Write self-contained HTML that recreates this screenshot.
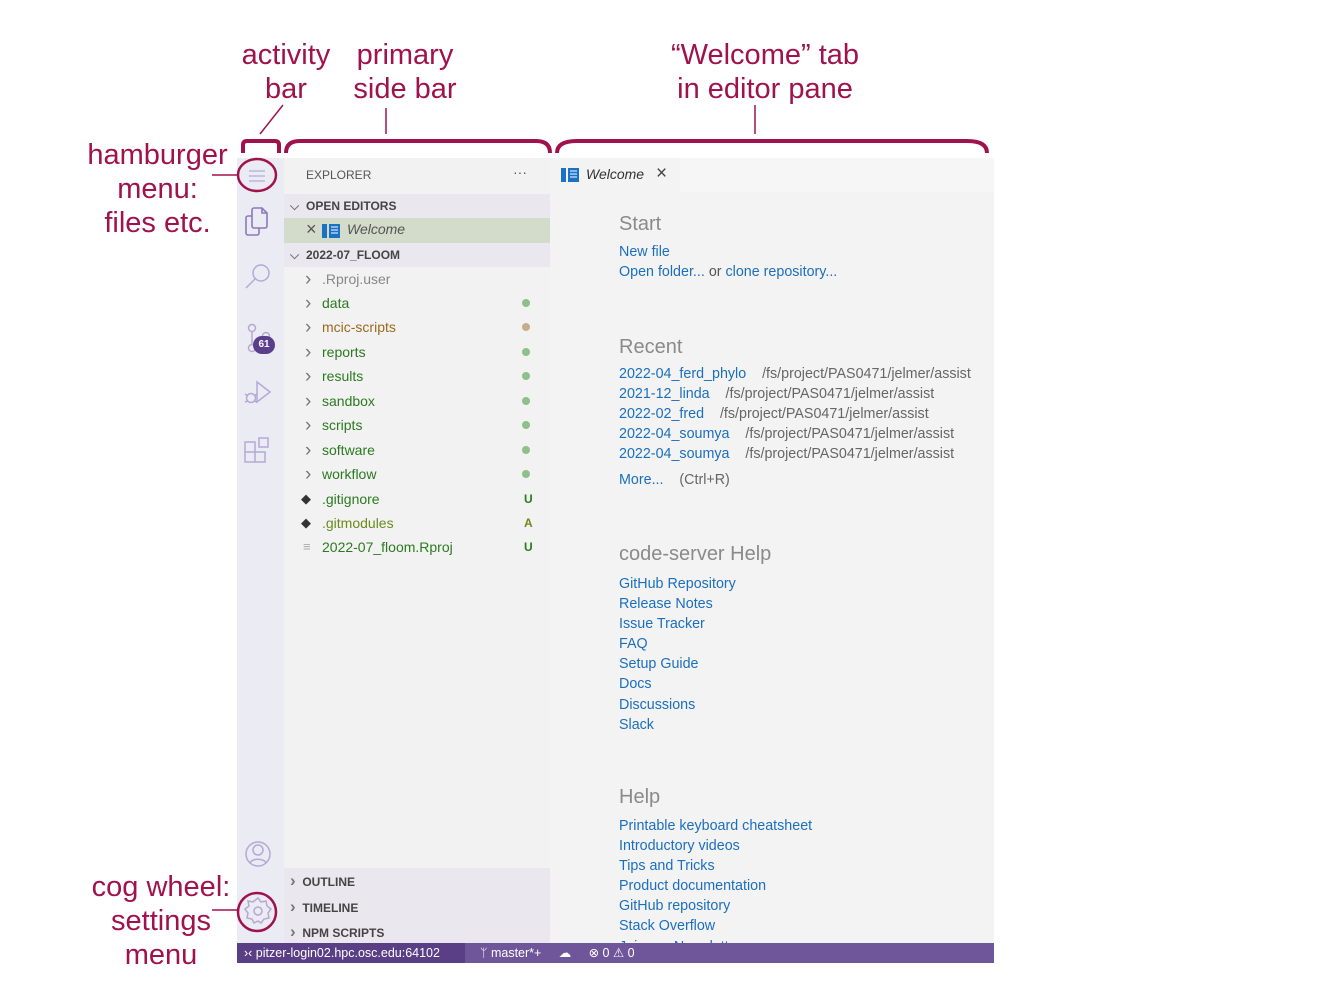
<!DOCTYPE html><html><head><meta charset="utf-8"><style>
*{margin:0;padding:0;box-sizing:border-box}
body{width:1323px;height:992px;background:#fff;position:relative;overflow:hidden;font-family:"Liberation Sans",sans-serif}
.a{position:absolute}
.ann{position:absolute;color:#a0124d;font-size:29px;text-align:center;line-height:34px}
.row{position:absolute;left:284px;width:266px;height:24px;font-size:14px;line-height:24px}
.row .n{position:absolute;left:38px}
.row .c{position:absolute;left:21px;top:2px;color:#777;font-size:19px;line-height:22px}
.dot{position:absolute;left:238px;top:8px;width:8px;height:8px;border-radius:50%;background:#8fbf8a}
.g{color:#2b7a1f}
.st{position:absolute;left:240px;font-size:12px;font-weight:bold;color:#2b7a1f}
.lnk{position:absolute;left:619px;color:#1b6fbf;font-size:14.3px;white-space:nowrap}
.path{color:#666;}
.h{position:absolute;left:619px;color:#8a8a8a;font-size:20px}
.sec{position:absolute;left:284px;width:266px;height:24px;background:#ebe7ef;font-size:12px;font-weight:bold;color:#444;line-height:24px}
</style></head><body>
<div class="ann" style="left:236px;top:38px;width:100px">activity<br>bar</div>
<div class="ann" style="left:340px;top:38px;width:130px">primary<br>side bar</div>
<div class="ann" style="left:640px;top:38px;width:250px">“Welcome” tab<br>in editor pane</div>
<div class="ann" style="left:80px;top:138px;width:155px;line-height:34px">hamburger<br>menu:<br>files etc.</div>
<div class="ann" style="left:86px;top:870px;width:150px;line-height:34px">cog wheel:<br>settings<br>menu</div>

<div class="a" style="left:237px;top:158px;width:47px;height:785px;background:#ebebf3"></div>
<div class="a" style="left:284px;top:158px;width:266px;height:785px;background:#f2f2f2"></div>
<div class="a" style="left:550px;top:158px;width:444px;height:785px;background:#f3f3f3"></div>
<div class="a" style="left:680px;top:158px;width:314px;height:34px;background:#f6f6f6"></div>

<svg class="a" style="left:237px;top:158px" width="47" height="785" fill="none" stroke="#b6a8d6" stroke-width="1.5">
<path d="M12 13h16M12 18h16M12 23h16" stroke="#c0b4dc"/>
<g stroke="#8e78bf" stroke-width="1.6"><path d="M15 58h-4a2 2 0 0 0-2 2v15a2 2 0 0 0 2 2h9a2 2 0 0 0 2-2v-5"/><path d="M15 52a2 2 0 0 1 2-2h8l5 5v13a2 2 0 0 1-2 2H17a2 2 0 0 1-2-2z"/><path d="M25 50v5h5"/></g>
<circle cx="24" cy="115" r="8"/><path d="M18 121l-9 9"/>
<circle cx="15" cy="170" r="3.5"/><circle cx="15" cy="190" r="3.5"/><circle cx="29" cy="178" r="3.5"/><path d="M15 174v12M29 182c0 6-8 4-12 8"/>
<path d="M20 224l13 10-13 10z"/><circle cx="14" cy="240" r="4.5"/><path d="M8 236l3 2M8 244l3-1M20 236l-3 2M20 244l-3-1"/>
<path d="M8 284h10v10H8zM8 294h10v10H8zM18 294h10v10H18z M22 280h9v9h-9z"/>
<circle cx="21" cy="696" r="12"/><circle cx="21" cy="692" r="5"/><path d="M13 705c2-5 14-5 16 0"/>
<circle cx="21" cy="753" r="4"/><path d="M21 740l3 4 5-1 1 5 4 3-3 4 1 5-5 1-3 4-3-2-4 2-2-4-5-1 1-5-3-4 4-3-1-5 5 1z"/>
</svg>
<div class="a" style="left:253px;top:336px;width:22px;height:18px;border-radius:9px;background:#5b3f8c;color:#fff;font-size:10px;font-weight:bold;text-align:center;line-height:18px">61</div>

<div class="a" style="left:306px;top:168px;font-size:12px;color:#555">EXPLORER</div>
<div class="a" style="left:513px;top:164px;font-size:14px;color:#555">···</div>
<div class="sec" style="top:194px"><span style="position:absolute;left:6px;color:#777">⌵</span><span style="position:absolute;left:22px">OPEN EDITORS</span></div>
<div class="a" style="left:284px;top:218px;width:266px;height:25px;background:#d3dccb"></div>
<div class="a" style="left:306px;top:219px;font-size:18px;color:#555">×</div>
<svg class="a" style="left:322px;top:224px" width="18" height="14"><rect width="5" height="14" fill="#1b72c4"/><rect x="7" width="11" height="14" fill="#1b72c4"/><path d="M9 3h7M9 6h7M9 9h7" stroke="#fff"/></svg>
<div class="a" style="left:347px;top:221px;font-size:14px;font-style:italic;color:#555">Welcome</div>
<div class="sec" style="top:243px"><span style="position:absolute;left:6px;color:#777">⌵</span><span style="position:absolute;left:22px">2022-07_FLOOM</span></div>
<div class="row" style="top:267px"><span class="c">›</span><span class="n" style="color:#888">.Rproj.user</span></div>
<div class="row" style="top:291px"><span class="c">›</span><span class="n g">data</span><i class="dot"></i></div>
<div class="row" style="top:315px"><span class="c">›</span><span class="n" style="color:#9a6a1c">mcic-scripts</span><i class="dot" style="background:#c8ad8c"></i></div>
<div class="row" style="top:340px"><span class="c">›</span><span class="n g">reports</span><i class="dot"></i></div>
<div class="row" style="top:364px"><span class="c">›</span><span class="n g">results</span><i class="dot"></i></div>
<div class="row" style="top:389px"><span class="c">›</span><span class="n g">sandbox</span><i class="dot"></i></div>
<div class="row" style="top:413px"><span class="c">›</span><span class="n g">scripts</span><i class="dot"></i></div>
<div class="row" style="top:438px"><span class="c">›</span><span class="n g">software</span><i class="dot"></i></div>
<div class="row" style="top:462px"><span class="c">›</span><span class="n g">workflow</span><i class="dot"></i></div>
<div class="row" style="top:487px"><span class="c" style="left:17px;top:0;color:#333;font-size:13px;line-height:24px">◆</span><span class="n g">.gitignore</span><span class="st">U</span></div>
<div class="row" style="top:511px"><span class="c" style="left:17px;top:0;color:#333;font-size:13px;line-height:24px">◆</span><span class="n" style="color:#6a8a1c">.gitmodules</span><span class="st" style="color:#6a8a1c">A</span></div>
<div class="row" style="top:535px"><span class="c" style="left:19px;top:0;color:#aaa;font-size:13px;line-height:24px">≡</span><span class="n g">2022-07_floom.Rproj</span><span class="st">U</span></div>
<div class="sec" style="top:868px;height:75px"></div>
<div class="a" style="left:290px;top:869px;font-size:12px;font-weight:bold;color:#444;line-height:24.5px"><span style="color:#777;font-size:17px">›</span>&nbsp; OUTLINE<br><span style="color:#777;font-size:17px">›</span>&nbsp; TIMELINE<br><span style="color:#777;font-size:17px">›</span>&nbsp; NPM SCRIPTS</div>

<svg class="a" style="left:561px;top:168px" width="18" height="14"><rect width="5" height="14" fill="#1b72c4"/><rect x="7" width="11" height="14" fill="#1b72c4"/><path d="M9 3h7M9 6h7M9 9h7" stroke="#fff"/></svg>
<div class="a" style="left:586px;top:166px;font-size:14px;font-style:italic;color:#333">Welcome</div>
<div class="a" style="left:656px;top:163px;font-size:19px;color:#444">×</div>

<div class="h" style="top:213px">Start</div>
<div class="lnk" style="top:244px">New file</div>
<div class="lnk" style="top:264px">Open folder... <span class="path" style="color:#555">or</span> clone repository...</div>
<div class="h" style="top:336px">Recent</div>
<div class="lnk" style="top:366px">2022-04_ferd_phylo &nbsp;&nbsp;&nbsp;<span class="path">/fs/project/PAS0471/jelmer/assist</span></div>
<div class="lnk" style="top:386px">2021-12_linda &nbsp;&nbsp;&nbsp;<span class="path">/fs/project/PAS0471/jelmer/assist</span></div>
<div class="lnk" style="top:406px">2022-02_fred &nbsp;&nbsp;&nbsp;<span class="path">/fs/project/PAS0471/jelmer/assist</span></div>
<div class="lnk" style="top:426px">2022-04_soumya &nbsp;&nbsp;&nbsp;<span class="path">/fs/project/PAS0471/jelmer/assist</span></div>
<div class="lnk" style="top:446px">2022-04_soumya &nbsp;&nbsp;&nbsp;<span class="path">/fs/project/PAS0471/jelmer/assist</span></div>
<div class="lnk" style="top:472px">More... &nbsp;&nbsp;&nbsp;<span class="path">(Ctrl+R)</span></div>
<div class="h" style="top:543px">code-server Help</div>
<div class="lnk" style="top:574px;line-height:20.1px">GitHub Repository<br>Release Notes<br>Issue Tracker<br>FAQ<br>Setup Guide<br>Docs<br>Discussions<br>Slack</div>
<div class="h" style="top:786px">Help</div>
<div class="lnk" style="top:816px;line-height:20.1px;height:127px;overflow:hidden">Printable keyboard cheatsheet<br>Introductory videos<br>Tips and Tricks<br>Product documentation<br>GitHub repository<br>Stack Overflow<br>Join our Newsletter</div>

<div class="a" style="left:237px;top:943px;width:757px;height:20px;background:#6f5599"></div>
<div class="a" style="left:237px;top:943px;width:228px;height:20px;background:#5a3e86;color:#fff;font-size:12.5px;line-height:21px;padding-left:7px">›‹ pitzer-login02.hpc.osc.edu:64102</div>
<div class="a" style="left:480px;top:943px;color:#fff;font-size:12.5px;line-height:21px;white-space:pre">ᛘ master*+     ☁     ⊗ 0 ⚠ 0</div>

<svg class="a" style="left:0;top:0" width="1323" height="992" fill="none" stroke="#a0124d">
<path d="M283 105L260 134" stroke-width="1.5"/>
<path d="M386 108V134" stroke-width="1.5"/>
<path d="M755 105V134" stroke-width="1.5"/>
<path d="M243 153v-8q0-4 4-4h28q4 0 4 4v8" stroke-width="4"/>
<path d="M286 153q0-12 14-12h236q14 0 14 12" stroke-width="4"/>
<path d="M557 153q0-12 20-12h390q20 0 20 12" stroke-width="4"/>
<ellipse cx="257" cy="175" rx="19" ry="16" stroke-width="2.5"/>
<path d="M212 175h25" stroke-width="1.5"/>
<circle cx="257" cy="912" r="19" stroke-width="2.5"/>
<path d="M212 910h25" stroke-width="1.5"/>
</svg>
</body></html>
